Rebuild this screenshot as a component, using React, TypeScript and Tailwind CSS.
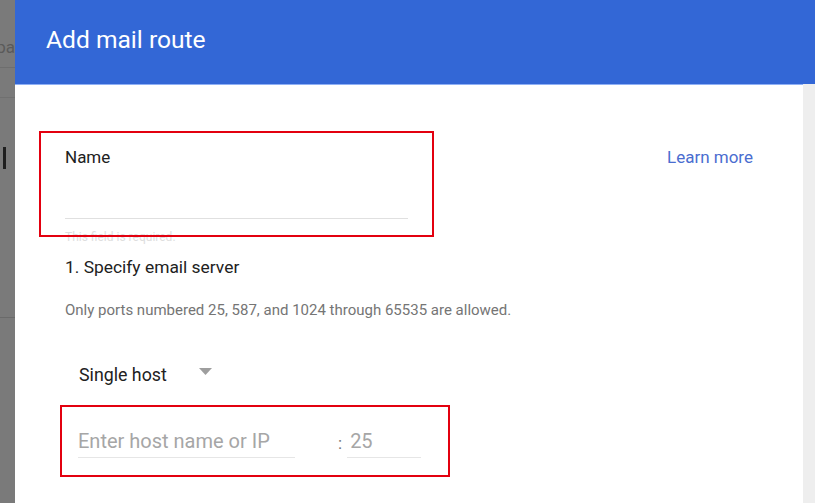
import React from "react";

const font = { fontFamily: "Roboto, 'Noto Sans', Arial, sans-serif" };

function BackdropStrip() {
  return (
    <div className="relative w-[15px] shrink-0 overflow-hidden bg-[#7a7a7a]">
      <div className="flex h-[68px] items-end justify-end overflow-hidden border-b border-[#6e6e6e] pb-[8px]">
        <span className="whitespace-nowrap text-[17px] leading-6 text-[#5a5a5a]">spa</span>
      </div>
      <div className="h-[30px] border-b border-[#707070]" />
      <div className="ml-[3px] mt-[49px] h-[22px] w-[3px] bg-[#1f1f1f]" />
      <div className="mt-[148px] border-b border-[#6a6a6a]" />
    </div>
  );
}

export default function App() {
  return (
    <div className="flex h-[503px] w-[815px] overflow-hidden bg-white" style={font}>
      <BackdropStrip />
      <div className="flex min-w-0 flex-1 flex-col">
        <div className="h-[84px] shrink-0 bg-[#3367d6] pl-[31px] pt-[24px] shadow-[0_1px_0_#8fb0f5]">
          <h1 className="text-[24.6px] leading-8 text-white">Add mail route</h1>
        </div>
        <div className="flex min-h-0 flex-1">
          <div className="relative flex-1 pl-[50px] pr-[50px] pt-[61px]">
            {/* annotation boxes */}
            <div className="absolute left-[24px] top-[47px] h-[106px] w-[395px] border-2 border-[#e3000f]" />
            <div className="absolute left-[45px] top-[321px] h-[72px] w-[390px] border-2 border-[#e3000f]" />

            <div className="flex items-start justify-between">
              <div className="w-[343px]">
                <div className="text-[17px] leading-6 text-[#212121]">Name</div>
                <div className="h-[50px] border-b border-[#e0e0e0]" />
              </div>
              <a className="text-[17px] leading-6 text-[#4a6dd0]">Learn more</a>
            </div>
            <div className="mt-[10px] text-[12px] leading-4 text-[#dedede]">This field is required.</div>
            <div className="mt-[10px] text-[17.4px] leading-6 text-[#212121]">1. Specify email server</div>
            <div className="mt-[21px] text-[15px] leading-5 text-[#757575]">
              Only ports numbered 25, 587, and 1024 through 65535 are allowed.
            </div>
            <div className="ml-[14px] mt-[43px] flex items-start">
              <span className="text-[17.8px] leading-6 text-[#212121]">Single host</span>
              <svg className="ml-[32px] mt-[5px]" width="13" height="7" viewBox="0 0 13 7">
                <path d="M0 0h13L6.5 7z" fill="#9e9e9e" />
              </svg>
            </div>
            <div className="ml-[13px] mt-[40px] flex items-start">
              <div className="h-[31px] w-[217px] border-b border-[#e6e6e6] text-[20px] leading-7 text-[#a6a6a6]">
                Enter host name or IP
              </div>
              <span className="ml-[43px] mt-[2px] text-[17px] leading-7 text-[#757575]">:</span>
              <div className="ml-[5px] h-[31px] w-[74px] border-b border-[#e6e6e6] pl-[3px] text-[20px] leading-7 text-[#a6a6a6]">
                25
              </div>
            </div>
          </div>
          <div className="w-[12px] shrink-0 bg-[#eeeeee]" />
        </div>
      </div>
    </div>
  );
}
